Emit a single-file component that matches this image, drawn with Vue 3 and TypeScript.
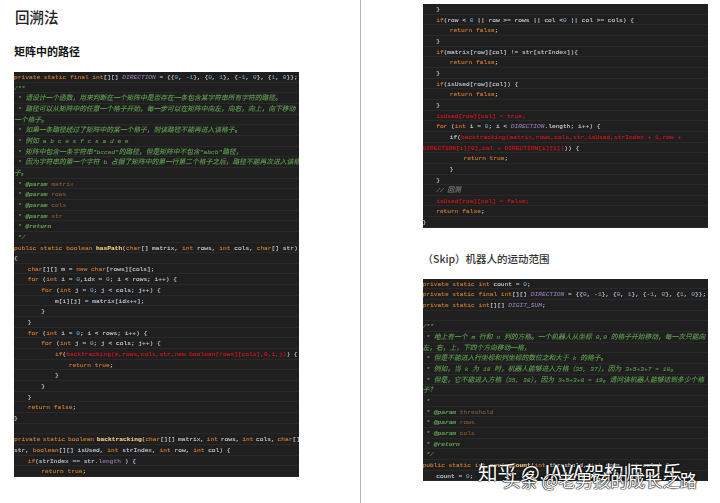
<script setup lang="ts">
type Seg = { cls: string; text: string };
type Row = { level: number; tight: boolean; segs: Seg[] };

const INDENT = 13.67;

const parse = (src: string[]): Row[] =>
  src.map((line) => {
    if (line === '') return { level: 0, tight: false, segs: [] };
    const segs = line.split('~').map((s) => ({ cls: s[0], text: s.slice(1) }));
    const spaces = segs[0].text.length - segs[0].text.trimStart().length;
    const level = Math.floor(spaces / 4);
    segs[0].text = segs[0].text.slice(level * 4);
    const tight = line.includes('backtracking~t(~kchar');
    return { level, tight, segs };
  });

const dirLine =
  'kprivate static final int~t[][] ~pDIRECTION~t = {{~n0~t, -~n1~t}, {~n0~t, ~n1~t}, {-~n1~t, ~n0~t}, {~n1~t, ~n0~t}};';

const blockA = parse([
  dirLine,
  'c/**',
  'c * ~C请设计一个函数，用来判断在一个矩阵中是否存在一条包含某字符串所有字符的路径。',
  'c * ~C路径可以从矩阵中的任意一个格子开始，每一步可以在矩阵中向左，向右，向上，向下移动',
  'C一个格子。',
  'c * ~C如果一条路径经过了矩阵中的某一个格子，则该路径不能再进入该格子。',
  'c * ~C例如 ~ca b c e s f c s a d e e',
  'c * ~C矩阵中包含一条字符串~c"bcced"~C的路径，但是矩阵中不包含~c"abcb"~C路径，',
  'c * ~C因为字符串的第一个字符 ~cb ~C占据了矩阵中的第一行第二个格子之后，路径不能再次进入该格',
  'C子。',
  'c * ~g@param ~bmatrix',
  'c * ~g@param ~brows',
  'c * ~g@param ~bcols',
  'c * ~g@param ~bstr',
  'c * ~g@return',
  'c */',
  'kpublic static boolean ~mhasPath~t(~kchar~t[] matrix, ~kint ~trows, ~kint ~tcols, ~kchar~t[] str)',
  't{',
  'k    char~t[][] m = ~knew char~t[rows][cols];',
  'k    for ~t(~kint ~ti = ~n0~t,idx = ~n0~t; i < rows; i++) {',
  'k        for ~t(~kint ~tj = ~n0~t; j < cols; j++) {',
  't            m[i][j] = matrix[idx++];',
  't        }',
  't    }',
  'k    for ~t(~kint ~ti = ~n0~t; i < rows; i++) {',
  'k        for ~t(~kint ~tj = ~n0~t; j < cols; j++) {',
  'k            if~t(~rbacktracking(m,rows,cols,str,new boolean[rows][cols],0,i,j)~t) {',
  'k                return true~t;',
  't            }',
  't        }',
  't    }',
  'k    return false~t;',
  't}',
  '',
  'kprivate static boolean ~mbacktracking~t(~kchar~t[][] matrix, ~kint ~trows, ~kint ~tcols, ~kchar~t[]',
  'tstr, ~kboolean~t[][] isUsed, ~kint ~tstrIndex, ~kint ~trow, ~kint ~tcol) {',
  'k    if~t(strIndex == str.~Plength ~t) {',
  'k        return true~t;',
]);

const blockB = parse([
  't    }',
  'k    if~t(row < ~n0 ~t|| row >= rows || col <~n0 ~t|| col >= cols) {',
  'k        return false~t;',
  't    }',
  'k    if~t(matrix[row][col] != str[strIndex]){',
  'k        return false~t;',
  't    }',
  'k    if~t(isUsed[row][col]) {',
  'k        return false~t;',
  't    }',
  'r    isUsed[row][col] = true;',
  'k    for ~t(~kint ~ti = ~n0~t; i < ~pDIRECTION~t.length; i++) {',
  't        if(~rbacktracking(matrix,rows,cols,str,isUsed,strIndex + 1,row +',
  'rDIRECTION[i][0],col + DIRECTION[i][1])~t)) {',
  'k            return true~t;',
  't        }',
  't    }',
  'x    // ~X回溯',
  'r    isUsed[row][col] = false;',
  'k    return false~t;',
  't}',
]);

const blockC = parse([
  'kprivate static int ~tcount = ~n0~t;',
  dirLine,
  'kprivate static int~t[][] ~pDIGIT_SUM~t;',
  '',
  'c/**',
  'c * ~C地上有一个 ~cm ~C行和 ~cn ~C列的方格。一个机器人从坐标 ~c0,0 ~C的格子开始移动，每一次只能向',
  'C左，右，上，下四个方向移动一格，',
  'c * ~C但是不能进入行坐标和列坐标的数位之和大于 ~ck ~C的格子。',
  'c * ~C例如，当 ~ck ~C为 ~c18 ~C时，机器人能够进入方格（~c35, 37~C），因为 ~c3+5+3+7 = 18~C。',
  'c * ~C但是，它不能进入方格（~c35, 38~C），因为 ~c3+5+3+8 = 19~C。请问该机器人能够达到多少个格',
  'C子？',
  'c *',
  'c * ~g@param ~bthreshold',
  'c * ~g@param ~brows',
  'c * ~g@param ~bcols',
  'c * ~g@return',
  'c */',
  'kpublic static int ~mmovingCount~t(~kint ~tthreshold, ~kint ~trows, ~kint ~tcols) {',
  't    count = ~n0~t;',
]);
</script>

<template>
  <div class="sheet">
    <section class="page page-left">
      <h1 class="title">回溯法</h1>
      <h2 class="subtitle">矩阵中的路径</h2>
      <div class="code">
        <div v-for="(row, i) in blockA" :key="i" class="row" :class="{ tight: row.tight }" :style="{ paddingLeft: row.level * INDENT + 'px' }">
          <span v-for="(seg, j) in row.segs" :key="j" :class="'s-' + seg.cls">{{ seg.text }}</span>
        </div>
      </div>
    </section>
    <section class="page page-right">
      <div class="code">
        <div v-for="(row, i) in blockB" :key="i" class="row" :style="{ paddingLeft: row.level * INDENT + 'px' }">
          <span v-for="(seg, j) in row.segs" :key="j" :class="'s-' + seg.cls">{{ seg.text }}</span>
        </div>
      </div>
      <h3 class="heading">（Skip）机器人的运动范围</h3>
      <div class="code">
        <div v-for="(row, i) in blockC" :key="i" class="row" :style="{ paddingLeft: row.level * INDENT + 'px' }">
          <span v-for="(seg, j) in row.segs" :key="j" :class="'s-' + seg.cls">{{ seg.text }}</span>
        </div>
      </div>
    </section>
    <div class="mark mark-a">知乎 @JAVA架构师可乐</div>
    <div class="mark mark-b">头条 @老男孩的成长之路</div>
  </div>
</template>

<style scoped>
.sheet {
  position: relative;
  display: flex;
  width: 720px;
  height: 503px;
  overflow: hidden;
  background: #fff;
  font-family: "Noto Sans CJK SC", "Liberation Sans", sans-serif;
}
.page {
  box-sizing: border-box;
  width: 360px;
  height: 503px;
  overflow: hidden;
}
.page-left {
  padding: 7px 0 0 14px;
}
.page-right {
  padding: 4px 13px 0 61.5px;
  border-left: 1px solid #b5b5b5;
}
.title {
  margin: 0 0 0 1px;
  font-size: 14.5px;
  line-height: 19px;
  font-weight: 500;
  color: #222;
}
.subtitle {
  margin: 15px 0 0;
  font-size: 11px;
  line-height: 20px;
  font-weight: 700;
  color: #111;
}
.heading {
  margin: 23px 0 12px;
  font-size: 10.5px;
  line-height: 16px;
  font-weight: 500;
  color: #333;
}
.subtitle + .code {
  margin-top: 11px;
}
.code {
  box-sizing: border-box;
  width: 285px;
  background: #1f1f1f;
  font-family: "Liberation Mono", "Noto Sans CJK SC", monospace;
  font-size: 6.22px;
  color: #a9b7c6;
  -webkit-text-stroke: 0.12px currentColor;
  filter: blur(0.35px);
}
.row {
  box-sizing: border-box;
  height: 10.67px;
  line-height: 11.6px;
  white-space: pre;
  overflow: hidden;
  border-bottom: 1px solid #292929;
}
.tight {
  word-spacing: -1px;
}
.s-k { color: #d07c30; }
.s-t { color: #c0cad4; }
.s-n { color: #6a94b8; }
.s-p { color: #8f78ac; font-style: italic; }
.s-P { color: #8f78ac; }
.s-c { color: #5f9a50; font-style: italic; }
.s-C { color: #5f9a50; font-style: italic; font-size: 6.75px; }
.s-g { color: #5f9a50; font-style: italic; font-weight: 700; }
.s-b { color: #7d5a36; }
.s-m { color: #f8cc7c; font-weight: 700; }
.s-r { color: #dc141c; }
.s-x { color: #7f7f7f; font-style: italic; }
.s-X { color: #7f7f7f; font-style: italic; font-size: 6.75px; }
.mark {
  position: absolute;
  white-space: nowrap;
  color: #fff;
  text-shadow: 0 0 1px #111, 0 0 1px #111, 0 0 1px #111, 0 0 2px rgba(0, 0, 0, 0.5);
}
.mark-a {
  left: 478px;
  top: 459px;
  font-size: 19.5px;
  line-height: 26px;
}
.mark-b {
  left: 503px;
  top: 468px;
  font-size: 17.4px;
  line-height: 24px;
}
</style>
